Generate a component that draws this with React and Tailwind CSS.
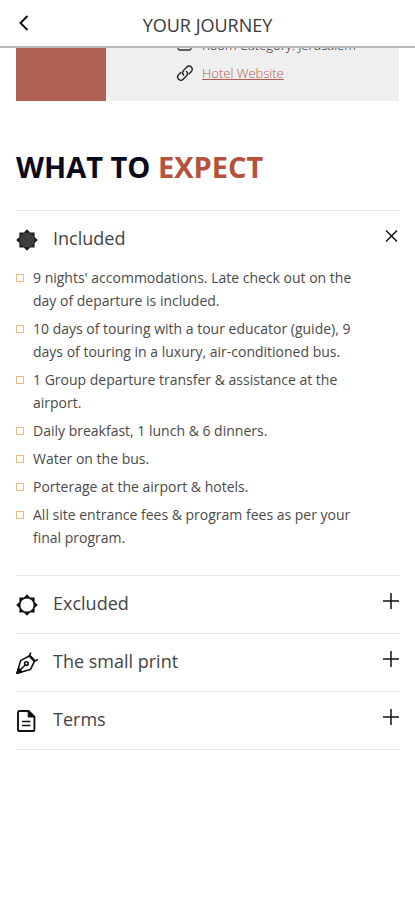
import { useState } from "react";

const STAR =
  "M12 1.2 L15.1 4.4 L19.6 4.4 L19.6 8.9 L22.8 12 L19.6 15.1 L19.6 19.6 L15.1 19.6 L12 22.8 L8.9 19.6 L4.4 19.6 L4.4 15.1 L1.2 12 L4.4 8.9 L4.4 4.4 L8.9 4.4 Z";

function BadgeFilled() {
  return (
    <svg className="size-6" viewBox="0 0 24 24" fill="#1c1c1c">
      <path d={STAR} />
      <circle cx="12" cy="12" r="7.6" fill="#3d3d3d" />
    </svg>
  );
}

function BadgeOutline() {
  return (
    <svg className="size-6" viewBox="0 0 24 24" fill="#111111" fillRule="evenodd">
      <path d={`${STAR} M12 5.4 A6.6 6.6 0 1 0 12 18.6 A6.6 6.6 0 1 0 12 5.4 Z`} />
    </svg>
  );
}

function NibIcon() {
  return (
    <svg
      className="size-6"
      viewBox="0 0 24 24"
      fill="none"
      stroke="currentColor"
      strokeWidth="1.6"
      strokeLinejoin="round"
      strokeLinecap="round"
    >
      <path d="M2 22.2 L5.6 9.6 L14.2 5 L19.4 10.4 L15.4 18.6 Z" />
      <path d="M14.2 5 L15.6 2.2 M19.4 10.4 L22.4 8.8 M15 4.6 L19.8 9.6" />
      <path d="M2.4 21.8 L10 14.2" />
      <circle cx="11.4" cy="12.6" r="1.8" />
      <path d="M2 22.2 L3.4 17.4 L6.8 20.9 Z" fill="currentColor" />
    </svg>
  );
}

function DocumentIcon() {
  return (
    <svg className="size-6" viewBox="0 0 24 24" fill="none" stroke="currentColor" strokeWidth="1.9" strokeLinejoin="round">
      <path d="M4.6 2 H13.6 L19.4 7.6 V20.4 A1.6 1.6 0 0 1 17.8 22 H4.6 A1.6 1.6 0 0 1 3 20.4 V3.6 A1.6 1.6 0 0 1 4.6 2 Z" />
      <path d="M13.2 2.4 V8 H19 Z" fill="currentColor" strokeWidth="1" />
      <path d="M7 12.4 H15.4 M7 16.6 H15.4" strokeWidth="1.5" />
    </svg>
  );
}

function LinkIcon() {
  return (
    <svg className="size-[18px]" viewBox="0 0 18 18" fill="none" stroke="#222222" strokeWidth="1.4" strokeLinecap="round">
      <path d="M7.6 11 A3.2 3.2 0 0 1 7.4 6.6 L10.8 3 A3.1 3.1 0 0 1 15.4 7.4 L13.2 9.8" />
      <path d="M10.4 7.4 A3.2 3.2 0 0 1 10.6 11.8 L7.2 15.2 A3.1 3.1 0 0 1 2.6 10.8 L4.8 8.5" />
    </svg>
  );
}

function RoomIcon() {
  return (
    <svg className="size-[18px]" viewBox="0 0 18 18" fill="none" stroke="#333333" strokeWidth="1.3">
      <rect x="2" y="3" width="13" height="11" rx="1.5" />
    </svg>
  );
}

const included = [
  "9 nights' accommodations. Late check out on the day of departure is included.",
  "10 days of touring with a tour educator (guide), 9 days of touring in a luxury, air-conditioned bus.",
  "1 Group departure transfer & assistance at the airport.",
  "Daily breakfast, 1 lunch & 6 dinners.",
  "Water on the bus.",
  "Porterage at the airport & hotels.",
  "All site entrance fees & program fees as per your final program.",
];

const sections = [
  { id: "included", title: "Included", icon: <BadgeFilled />, items: included },
  { id: "excluded", title: "Excluded", icon: <BadgeOutline />, items: [] },
  { id: "small-print", title: "The small print", icon: <NibIcon />, items: [] },
  { id: "terms", title: "Terms", icon: <DocumentIcon />, items: [] },
];

function AccordionItem({ section, open, onToggle }) {
  return (
    <div className="border-b border-[#e6e6e6]">
      <h3>
        <button
          type="button"
          aria-expanded={open}
          aria-controls={section.id}
          onClick={onToggle}
          className="flex h-[57px] w-full items-center pb-1 text-left text-[#111111]"
        >
          <span className="-ml-px flex w-[38px] shrink-0 pt-1">{section.icon}</span>
          <span className="flex-1 text-lg text-[#444444]">{section.title}</span>
          <svg
            className="mb-1 size-4"
            viewBox="0 0 16 16"
            fill="none"
            stroke="currentColor"
            strokeWidth="1.5"
          >
            {open ? <path d="M3 2.5 L14 13.5 M14 2.5 L3 13.5" /> : <path d="M8 0 V16 M0 8 H16" />}
          </svg>
        </button>
      </h3>
      {open && section.items.length > 0 && (
        <ul id={section.id} className="-mt-0.5 flex flex-col gap-[5px] pr-8 pb-[26px]">
          {section.items.map((item) => (
            <li key={item} className="flex text-sm leading-[23px] text-[#4a4a4a]">
              <span className="mt-2 mr-[9px] size-2 shrink-0 border border-[#eebb85]"></span>
              <span>{item}</span>
            </li>
          ))}
        </ul>
      )}
    </div>
  );
}

export default function App() {
  const [openId, setOpenId] = useState("included");

  return (
    <div className="min-h-screen bg-white font-['Open_Sans',sans-serif]">
      <header className="sticky top-0 z-10 flex h-12 items-center border-b-2 border-[#b5b5b5] bg-white px-4">
        <button type="button" aria-label="Back" className="w-6 text-[#111111]">
          <svg className="size-4" viewBox="0 0 16 16" fill="none" stroke="currentColor" strokeWidth="2">
            <path d="M11.5 1 L4.5 8 L11.5 15" />
          </svg>
        </button>
        <h1 className="flex-1 pt-1 text-center text-lg text-[#3a3a3a]">YOUR JOURNEY</h1>
        <span className="w-6"></span>
      </header>

      <main className="px-4">
        {/* Hotel card, scrolled under the header */}
        <section className="-mt-6 flex bg-[#efefef]">
          <div className="w-[90px] shrink-0 bg-[#b06055]"></div>
          <div className="flex flex-1 flex-col gap-2 pt-[11px] pb-[18px] pl-[70px] text-[13px] leading-5">
            <p className="flex items-center gap-2 font-light text-[#222222]">
              <RoomIcon />
              Room Category: Jerusalem
            </p>
            <p className="flex items-center gap-2">
              <LinkIcon />
              <a href="#hotel" className="font-light text-[#b5594c] underline">
                Hotel Website
              </a>
            </p>
          </div>
        </section>

        <h2 className="mt-[47px] text-[29px] leading-[38px] font-bold text-[#0b0b1c]">
          WHAT TO <span className="text-[#b5513c]">EXPECT</span>
        </h2>

        <div className="mt-6 border-t border-[#e6e6e6]">
          {sections.map((section) => (
            <AccordionItem
              key={section.id}
              section={section}
              open={openId === section.id}
              onToggle={() => setOpenId(openId === section.id ? null : section.id)}
            />
          ))}
        </div>
      </main>
    </div>
  );
}
